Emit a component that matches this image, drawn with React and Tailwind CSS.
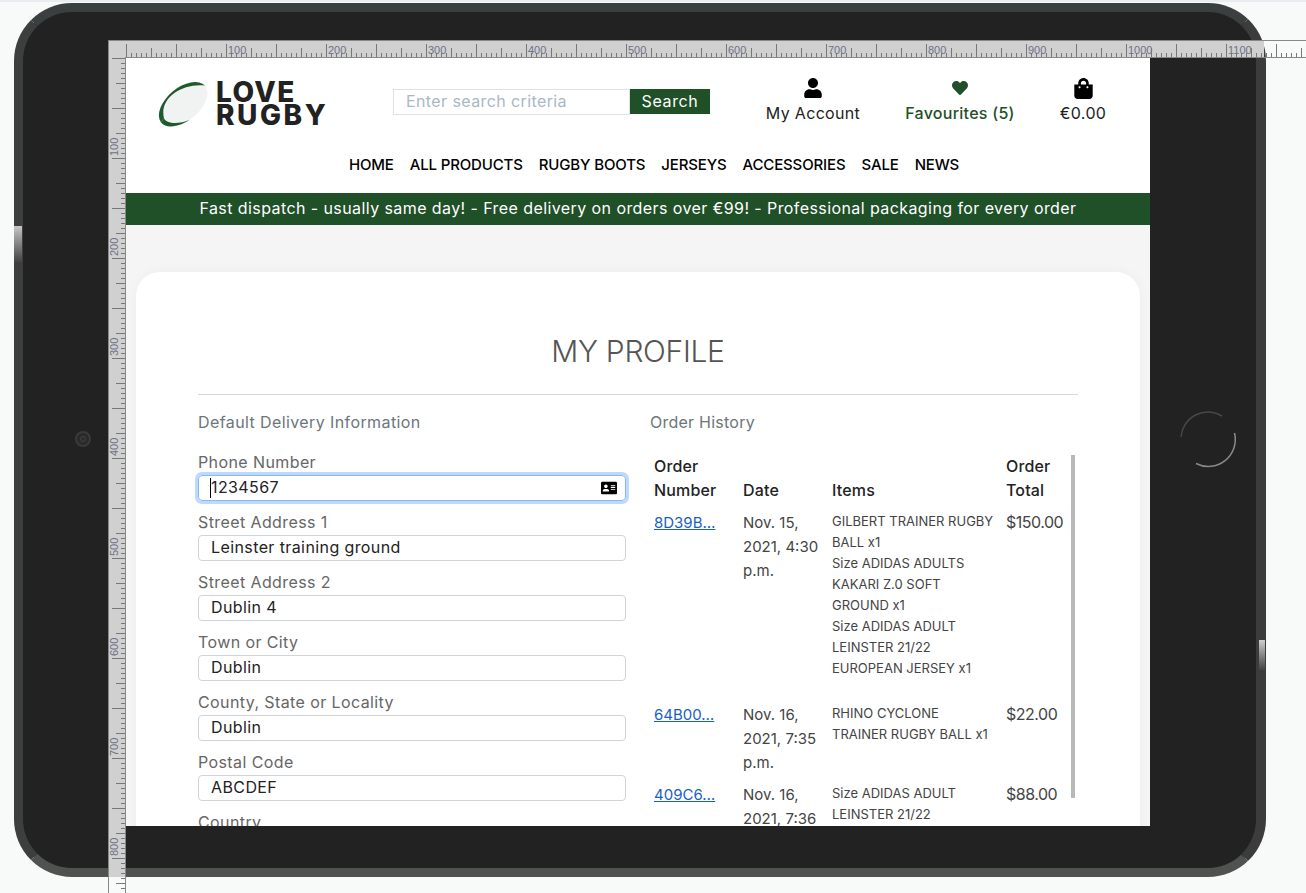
import React from 'react';
import { FaUser, FaHeart, FaShoppingBag, FaAddressCard } from 'react-icons/fa';

const navItems = ['HOME', 'ALL PRODUCTS', 'RUGBY BOOTS', 'JERSEYS', 'ACCESSORIES', 'SALE', 'NEWS'];

const fields = [
  { label: 'Phone Number', value: '1234567', focused: true },
  { label: 'Street Address 1', value: 'Leinster training ground' },
  { label: 'Street Address 2', value: 'Dublin 4' },
  { label: 'Town or City', value: 'Dublin' },
  { label: 'County, State or Locality', value: 'Dublin' },
  { label: 'Postal Code', value: 'ABCDEF' },
];

// lines are split by hand so they wrap where the original column wraps
const orders = [
  {
    number: '8D39B…',
    date: ['Nov. 15,', '2021, 4:30', 'p.m.'],
    items: ['GILBERT TRAINER RUGBY', 'BALL x1', 'Size ADIDAS ADULTS', 'KAKARI Z.0 SOFT', 'GROUND x1', 'Size ADIDAS ADULT', 'LEINSTER 21/22', 'EUROPEAN JERSEY x1'],
    total: '$150.00',
  },
  { number: '64B00…', date: ['Nov. 16,', '2021, 7:35', 'p.m.'], items: ['RHINO CYCLONE', 'TRAINER RUGBY BALL x1'], total: '$22.00' },
  { number: '409C6…', date: ['Nov. 16,', '2021, 7:36', 'p.m.'], items: ['Size ADIDAS ADULT', 'LEINSTER 21/22', 'EUROPEAN JERSEY x1'], total: '$88.00' },
];

const Rulers = () => {
  const hTicks = [];
  for (let v = 0; v <= 1180; v += 5) {
    const h = v % 50 === 0 ? 13 : v % 25 === 0 ? 9 : 4;
    hTicks.push(<line key={v} x1={126.5 + v} x2={126.5 + v} y1={57} y2={57 - h} stroke="#777" />);
  }
  const vTicks = [];
  for (let v = 0; v <= 835; v += 5) {
    const h = v % 50 === 0 ? 13 : v % 25 === 0 ? 9 : 4;
    vTicks.push(<line key={v} y1={58.5 + v} y2={58.5 + v} x1={125} x2={125 - h} stroke="#777" />);
  }
  const labels = [100, 200, 300, 400, 500, 600, 700, 800, 900, 1000, 1100];
  return (
    <svg className="absolute left-0 top-0 pointer-events-none" width="1306" height="893">
      <rect x="108" y="40" width="1156" height="18" fill="#d0d0d0" />
      <rect x="108" y="40" width="18" height="837" fill="#d0d0d0" />
      <line x1="108" x2="1306" y1="40.5" y2="40.5" stroke="#888" />
      <line x1="125" x2="1306" y1="57.5" y2="57.5" stroke="#888" />
      <line x1="108.5" x2="108.5" y1="40" y2="893" stroke="#888" />
      <line x1="125.5" x2="125.5" y1="57" y2="893" stroke="#888" />
      {hTicks}
      {vTicks}
      {labels.map((v) => (
        <text key={v} x={128 + v} y={54} fontSize="11" fontFamily="Liberation Sans, sans-serif" fill="#6f7088">{v}</text>
      ))}
      {labels.slice(0, 8).map((v) => (
        <text key={v} x={0} y={0} fontSize="11" fontFamily="Liberation Sans, sans-serif" fill="#6f7088" transform={`translate(118 ${56 + v}) rotate(-90)`}>{v}</text>
      ))}
    </svg>
  );
};

const Ball = () => (
  <svg width="50" height="46" viewBox="0 0 50 46" className="shrink-0">
    <ellipse cx="25" cy="23" rx="28.7" ry="16.8" transform="rotate(-40 25 23)" fill="#f1f3f3" />
    <path d="M3 41.4 A28.7 16.8 -40 0 1 47 4.6 C24 2 1 17.5 6 37 Z" fill="#1f5a2c" />
    <path d="M3 41.4 A28.7 16.8 -40 0 0 31.8 38.8 C20 44 8 42.7 6 37 Z" fill="#1f5a2c" />
  </svg>
);

const HeaderLink = ({ icon, label, className, w }) => (
  <div className={`flex flex-col items-center ${w} ${className}`}>
    <div className="h-[24px] flex items-center justify-center">{icon}</div>
    <span className="text-base leading-6 mt-[1px] whitespace-nowrap">{label}</span>
  </div>
);

const Field = ({ label, value, focused }) => (
  <div>
    <label className="block text-base leading-6 text-[#666] tracking-[0.025em]">{label}</label>
    <div className="relative mt-[1px]">
      <input
        readOnly
        value={value}
        className={`block w-full h-[26px] rounded border pl-[12px] pr-[40px] pb-[2px] text-base text-[#222] tracking-[0.025em] outline-none ${
          focused ? 'border-[#86b7fe] shadow-[0_0_0_3px_#bfd9fb]' : 'border-[#ced4da]'
        }`}
      />
      {focused && (
        <>
          <span className="absolute left-[12px] top-[3px] h-[20px] w-[1px] bg-black" />
          <FaAddressCard className="absolute right-[9px] top-[5px] text-[16px] text-black" />
        </>
      )}
    </div>
  </div>
);

export default function App() {
  return (
    <div className="relative w-[1306px] h-[893px] overflow-hidden bg-[#f8fafa] pt-[3px] shadow-[inset_0_2px_0_#e9ecf1] font-[Inter,sans-serif]">
      <div className="ml-[14px] w-[1252px] h-[874px] rounded-[58px] bg-[#222] border-solid border-t-[9px] border-l-[9px] border-r-[10px] border-b-[9px] border-t-[#3a3f3f] border-l-[#3d3f3f] border-r-[#3c3c3c] border-b-[#505250] pl-[103px] pt-[46px]">
        <div className="w-[1024px] h-[768px] overflow-hidden bg-[#f5f5f5]">
          <header className="bg-white h-[135px]">
            <div className="flex h-[87px] items-start">
              <div className="flex items-center pl-[32px] pt-[23px] w-[267px]">
                <Ball />
                <div className="ml-[8px] -mt-[1px] text-[28px] leading-[23px] font-extrabold text-[#222]">
                  <div className="tracking-[0.05em]">LOVE</div>
                  <div className="tracking-[0.09em]">RUGBY</div>
                </div>
              </div>
              <div className="flex mt-[31px] h-[26px]">
                <input
                  readOnly
                  placeholder="Enter search criteria"
                  className="w-[237px] h-[26px] border border-[#dee2e6] pl-[12px] pb-[2px] text-base tracking-[0.025em] placeholder:text-[#aab8c5] outline-none"
                />
                <button className="w-[80px] h-[25px] pb-[2px] bg-[#1f5028] text-white text-base tracking-[0.04em]">Search</button>
              </div>
              <div className="flex pt-[18px] ml-[48px]">
                <HeaderLink w="w-[110px]" className="text-[#222] tracking-[0.02em]" icon={<FaUser className="text-[20px] text-black" />} label="My Account" />
                <HeaderLink w="w-[120px] ml-[32px]" className="text-[#1f5028] font-medium tracking-[0.017em]" icon={<FaHeart className="text-[16px] text-[#1f5028]" />} label="Favourites (5)" />
                <HeaderLink w="w-[60px] ml-[33px]" className="text-[#222] tracking-[0.025em]" icon={<FaShoppingBag className="text-[21px] text-black" />} label="€0.00" />
              </div>
            </div>
            <nav className="flex justify-center gap-4 pl-[32px] text-[15px] leading-6 font-medium text-black h-[48px] pt-[8px] tracking-[-0.01em]">
              {navItems.map((item) => (
                <a key={item} className="whitespace-nowrap">{item}</a>
              ))}
            </nav>
          </header>
          <div className="h-[32px] bg-[#1f5028] text-white text-base leading-[31px] text-center tracking-[0.026em] whitespace-nowrap">
            Fast dispatch - usually same day! - Free delivery on orders over €99! - Professional packaging for every order
          </div>

          <main className="mt-[47px] mx-[10px] bg-white rounded-[24px] shadow-[0_0_12px_rgba(0,0,0,0.04)] px-[62px] pt-[55px] pb-10">
            <h1 className="text-[30px] leading-[48px] font-light text-[#555] text-center tracking-[-0.01em]">MY PROFILE</h1>
            <hr className="mt-[19px] border-[#d8d8d8]" />
            <div className="flex gap-6 mt-[15px]">
              <section className="w-[428px]">
                <h2 className="text-base leading-6 text-[#6c757d] tracking-[0.025em] mb-4">Default Delivery Information</h2>
                <div className="flex flex-col gap-[9px]">
                  {fields.map((f) => (
                    <Field key={f.label} {...f} />
                  ))}
                  <label className="block text-base leading-6 text-[#666] tracking-[0.025em]">Country</label>
                </div>
              </section>
              <section className="w-[428px]">
                <h2 className="text-base leading-6 text-[#6c757d] tracking-[0.015em] mb-5">Order History</h2>
                <div className="relative w-[425px]">
                  <table className="table-fixed w-[418px] border-collapse text-base leading-6">
                    <colgroup>
                      <col className="w-[89px]" />
                      <col className="w-[89px]" />
                      <col className="w-[174px]" />
                      <col className="w-[66px]" />
                    </colgroup>
                    <thead>
                      <tr className="text-left align-bottom text-[#222] tracking-[0.01em]">
                        <th className="font-medium px-1 pb-1">Order Number</th>
                        <th className="font-medium px-1 pb-1">Date</th>
                        <th className="font-medium px-1 pb-1">Items</th>
                        <th className="font-medium px-1 pb-1">Order Total</th>
                      </tr>
                    </thead>
                    <tbody>
                      {orders.map((o) => (
                        <tr key={o.number} className="align-top text-[#444]">
                          <td className="px-1 pt-[5px] pb-[3px] text-[15px]"><a className="text-[#1a5fc4] underline">{o.number}</a></td>
                          <td className="px-1 pt-[5px] pb-[3px] text-[15px] whitespace-nowrap">
                            {o.date.map((line) => (
                              <div key={line}>{line}</div>
                            ))}
                          </td>
                          <td className="px-1 pt-[5px] pb-[3px] whitespace-nowrap">
                            <div className={`text-[13px] leading-[21px] ${o.items.length > 3 ? 'pb-4' : ''}`}>
                              {o.items.map((line) => (
                                <div key={line}>{line}</div>
                              ))}
                            </div>
                          </td>
                          <td className="p-1 tracking-[-0.03em] whitespace-nowrap">{o.total}</td>
                        </tr>
                      ))}
                    </tbody>
                  </table>
                  <div className="absolute right-0 top-[1px] h-[343px] w-[4px] bg-[#b8b8b8]" />
                </div>
              </section>
            </div>
          </main>
        </div>
      </div>

      {/* hardware details on the bezel */}
      <svg className="absolute left-[1178px] top-[409px]" width="60" height="60" viewBox="0 0 60 60">
        <path d="M3 28 A27 27 0 0 1 44 7" fill="none" stroke="#484848" strokeWidth="1.5" />
        <path d="M56.5 24 A27 27 0 0 1 18 54.5" fill="none" stroke="#8a8a8a" strokeWidth="1.5" />
      </svg>
      <div className="absolute left-[75px] top-[431px] w-[16px] h-[16px] rounded-full bg-[#2a2a2a] border-2 border-[#3a3a3a] flex items-center justify-center">
        <div className="w-[6px] h-[6px] rounded-full border border-[#444]" />
      </div>
      <div className="absolute left-[14px] top-[226px] w-[8px] h-[36px] bg-gradient-to-b from-[#c8c8c8] to-[#444]" />
      <div className="absolute left-[1259px] top-[640px] w-[6px] h-[30px] bg-gradient-to-b from-[#d0d0d0] to-[#444]" />

      <Rulers />
    </div>
  );
}
